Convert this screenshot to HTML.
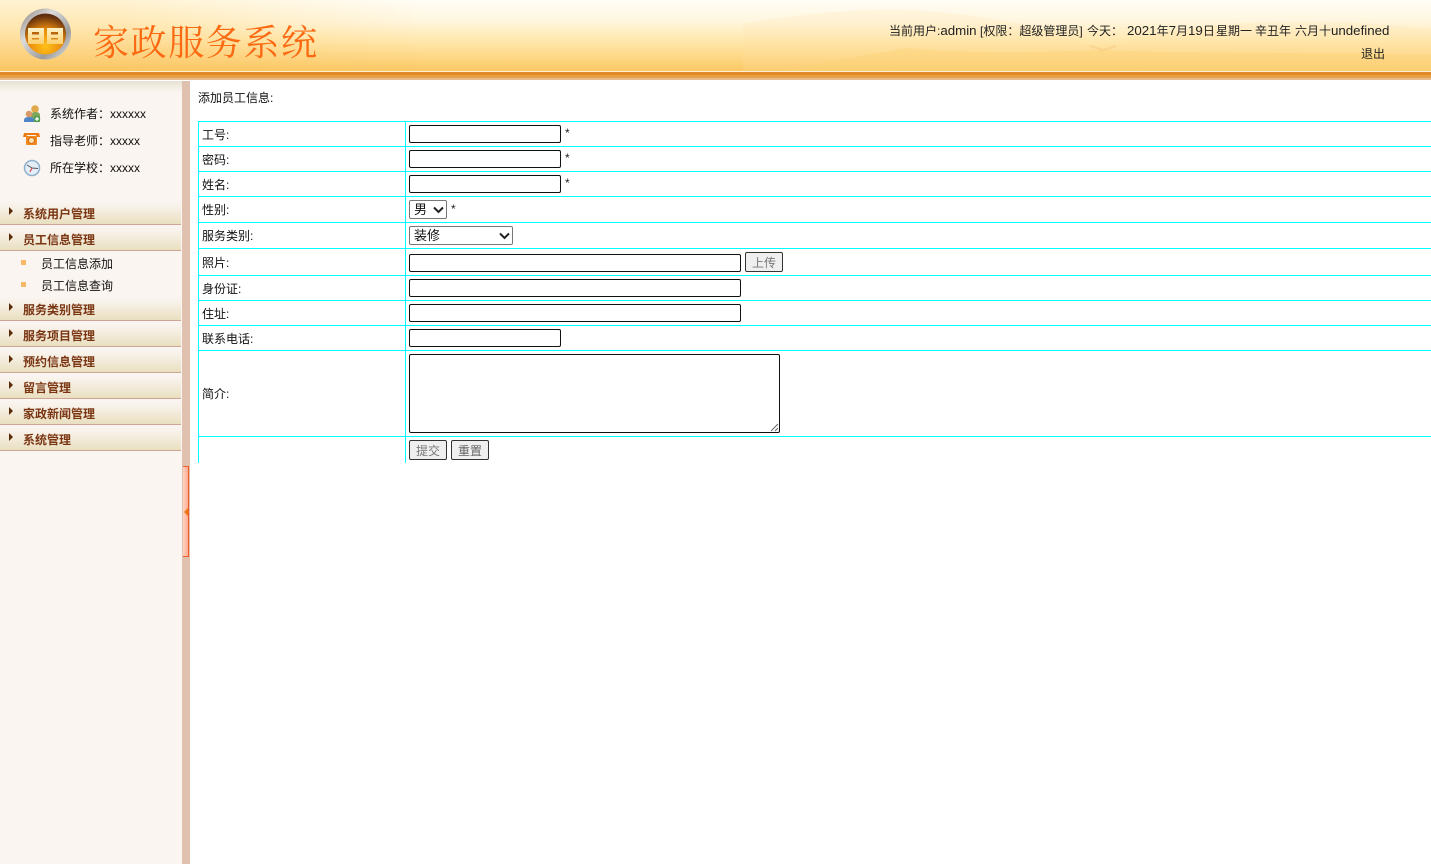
<!DOCTYPE html>
<html lang="zh"><head><meta charset="utf-8"><title>家政服务系统</title>
<style>
html,body{margin:0;padding:0;width:1431px;height:864px;overflow:hidden;background:#fff}
body{position:relative;font:12px/16px "Liberation Sans","Noto Sans CJK SC",sans-serif;color:#111}
.a{position:absolute;white-space:nowrap}
.t{position:absolute;white-space:nowrap;top:23px;color:#222}
.t u{text-decoration:none;font-size:13.300px}
.m{position:absolute;left:0;width:181px;height:22px;background:linear-gradient(#faf5f0 0,#f6efe4 30%,#e9dfc0 100%);border-bottom:1px solid #cfa595}
.m b{position:absolute;left:23px;top:4px;color:#7a3512;font-weight:bold;line-height:16px;white-space:nowrap}
.m i{position:absolute;left:9px;top:5px;width:0;height:0;border-left:4px solid #5a2a08;border-top:4px solid transparent;border-bottom:4px solid transparent}
.h{position:absolute;left:198px;width:1233px;height:1px;background:#0ff}
.l{position:absolute;left:202px;line-height:16px;white-space:nowrap}
.in{position:absolute;box-sizing:border-box;background:#fff;border:1px solid #111;border-radius:2px;left:409px;height:18px}
.sel{position:absolute;box-sizing:border-box;background:#fff;border:1px solid #777;border-radius:2px;left:409px;height:19px;line-height:17px;padding-left:4px;font-size:13px}
.btn{position:absolute;box-sizing:border-box;background:#efefef;border:1px solid #333;border-radius:2px;height:20px;width:38px;text-align:center;line-height:20px;color:#777}
.star{position:absolute;line-height:14px;color:#222}
.bl{position:absolute;left:21px;width:5px;height:5px;background:#f8b868;border:0}
</style></head><body>

<svg class="a" style="left:0;top:0" width="1431" height="81">
<defs>
<linearGradient id="g" x1="0" y1="0" x2="0" y2="1"><stop offset="0" stop-color="#fffdf6"/><stop offset=".3" stop-color="#fff6de"/><stop offset=".6" stop-color="#ffe6a8"/><stop offset="1" stop-color="#fcc964"/></linearGradient>
<linearGradient id="gl" x1="0" y1="0" x2="0" y2="1"><stop offset="0" stop-color="#fff3d4"/><stop offset=".4" stop-color="#ffe6ae"/><stop offset="1" stop-color="#fbc662"/></linearGradient>
<linearGradient id="fade" x1="0" x2="1" y1="0" y2="0"><stop offset="0" stop-color="#fff"/><stop offset=".3" stop-color="#fff"/><stop offset="1" stop-color="#000"/></linearGradient>
<mask id="mk"><rect width="420" height="71" fill="url(#fade)"/></mask>
<radialGradient id="ball" cx=".5" cy=".8" r=".75"><stop offset="0" stop-color="#ffc21a"/><stop offset=".55" stop-color="#e98a0c"/><stop offset="1" stop-color="#5f2e10"/></radialGradient>
<linearGradient id="ring" x1="0" y1="0" x2="1" y2="1"><stop offset="0" stop-color="#8a8078"/><stop offset=".35" stop-color="#dcdcdc"/><stop offset=".7" stop-color="#9c9c9c"/><stop offset="1" stop-color="#e8e8e8"/></linearGradient>
<linearGradient id="glyph" x1="0" y1="0" x2="0" y2="1"><stop offset="0" stop-color="#fff2c8"/><stop offset="1" stop-color="#fcd070"/></linearGradient>
</defs>
<rect width="1431" height="71" fill="url(#g)"/>
<rect width="420" height="71" fill="url(#gl)" mask="url(#mk)"/>
<path d="M743 71V24C800 14 860 8 910 10C980 14 1040 25 1103 48C1170 24 1300 12 1431 30V71Z" fill="#fde0a8" opacity=".2"/>
<path d="M780 71C830 62 870 55 905 48C970 54 1040 52 1103 50C1190 54 1320 52 1431 55V71Z" fill="#fdd378" opacity=".45"/>
<path d="M1090 46L1103 50L1116 46" fill="none" stroke="#f2bd76" stroke-width="2" opacity=".4"/>
<rect y="71" width="1431" height="1" fill="#fff0d0"/>
<rect y="72" width="1431" height="3" fill="#de8a2a"/>
<rect y="75" width="1431" height="2" fill="#ee9f3a"/>
<rect y="77" width="1431" height="1" fill="#d9a05c"/>
<rect y="78" width="1431" height="2" fill="#eab98c"/>
<circle cx="45.500" cy="34" r="25.500" fill="url(#ring)"/>
<circle cx="45.500" cy="34" r="20.500" fill="url(#ball)"/>
<path d="M28 28h16v16h-16zM47 28h16v16h-16z" fill="url(#glyph)"/>
<path d="M32 32h7v2.500h-7zM51 32h7v2.500h-7z" fill="#b8660c"/>
<path d="M32 38h7v1.500h-7zM51 38h7v1.500h-7z" fill="#d8861a"/>
</svg>

<div class="a" style="left:93px;top:17px;font:36px/52px 'Liberation Serif','Noto Serif CJK SC',serif;letter-spacing:1.600px;color:#fb6a12">家政服务系统</div>

<div class="t" style="left:889px">当前用户:<u>admin</u></div>
<div class="t" style="left:980px">[权限：超级管理员]</div>
<div class="t" style="left:1087px">今天：</div>
<div class="t" style="left:1127px"><u>2021</u>年<u>7</u>月<u>19</u>日</div>
<div class="t" style="left:1216px">星期一</div>
<div class="t" style="left:1255px">辛丑年</div>
<div class="t" style="left:1295px">六月十</div>
<div class="t" style="left:1331px"><u>undefined</u></div>
<div class="a" style="left:1361px;top:46px;color:#222">退出</div>

<!-- sidebar -->
<div class="a" style="left:0;top:81px;width:182px;height:783px;background:#faf5f0"></div>
<div class="a" style="left:0;top:81px;width:182px;height:11px;background:linear-gradient(#e8e2d4,#faf5f0)"></div>
<div class="a" style="left:182px;top:81px;width:8px;height:783px;background:#e0c0ae"></div>
<div class="a" style="left:183px;top:466px;width:5px;height:89px;background:linear-gradient(90deg,#ffd2c0,#ffae96);border:1px solid #ee5a28;border-left:0"></div>
<div class="a" style="left:184px;top:508px;width:0;height:0;border-right:4px solid #ea7a10;border-top:4px solid transparent;border-bottom:4px solid transparent"></div>

<svg class="a" style="left:22px;top:103px" width="22" height="76">
<circle cx="13" cy="6" r="3.800" fill="#e0a94c"/><path d="M9 19v-7q0-3 4.500-3t4.500 3v7z" fill="#7fa65a"/>
<circle cx="7" cy="11" r="3.300" fill="#d99a68"/><path d="M2 19v-2q0-3 5-3t5 3v2z" fill="#4f86c6"/>
<circle cx="15" cy="16" r="3.200" fill="#4d9a4d"/><path d="M13 15.400h4v1.200h-4zM14.400 14h1.200v4h-1.200z" fill="#fff"/>
<path d="M2 30h15l1 4h-3l-1-2h-9l-1 2h-3z" fill="#ec7a10"/><rect x="4" y="33" width="11" height="9" rx="1" fill="#f08a1c"/><circle cx="9.500" cy="37.500" r="3" fill="#fce0b0" stroke="#d96a10"/>
<circle cx="10" cy="65" r="7.500" fill="#e4eef6" stroke="#8fb0cc" stroke-width="1.500"/><path d="M10 65L5 62M10 65L16 65.500" stroke="#555" fill="none"/><path d="M10 65L8 69" stroke="#d33" fill="none"/>
</svg>
<div class="a" style="left:50px;top:106px">系统作者：xxxxxx</div>
<div class="a" style="left:50px;top:133px">指导老师：xxxxx</div>
<div class="a" style="left:50px;top:160px">所在学校：xxxxx</div>

<div class="m" style="top:202px"><i></i><b>系统用户管理</b></div>
<div class="m" style="top:228px"><i></i><b>员工信息管理</b></div>
<div class="bl" style="top:260px"></div><div class="a" style="left:41px;top:256px">员工信息添加</div>
<div class="bl" style="top:282px"></div><div class="a" style="left:41px;top:278px">员工信息查询</div>
<div class="m" style="top:298px"><i></i><b>服务类别管理</b></div>
<div class="m" style="top:324px"><i></i><b>服务项目管理</b></div>
<div class="m" style="top:350px"><i></i><b>预约信息管理</b></div>
<div class="m" style="top:376px"><i></i><b>留言管理</b></div>
<div class="m" style="top:402px"><i></i><b>家政新闻管理</b></div>
<div class="m" style="top:428px"><i></i><b>系统管理</b></div>

<!-- content -->
<div class="a" style="left:198px;top:90px">添加员工信息:</div>
<div class="a" style="left:198px;top:121px;width:1px;height:342px;background:#0ff"></div>
<div class="a" style="left:405px;top:121px;width:1px;height:342px;background:#0ff"></div>
<div class="h" style="top:121px"></div><div class="h" style="top:146px"></div><div class="h" style="top:171px"></div><div class="h" style="top:196px"></div><div class="h" style="top:222px"></div><div class="h" style="top:248px"></div><div class="h" style="top:275px"></div><div class="h" style="top:300px"></div><div class="h" style="top:325px"></div><div class="h" style="top:350px"></div><div class="h" style="top:436px"></div>

<div class="l" style="top:127px">工号:</div>
<div class="l" style="top:152px">密码:</div>
<div class="l" style="top:177px">姓名:</div>
<div class="l" style="top:202px">性别:</div>
<div class="l" style="top:228px">服务类别:</div>
<div class="l" style="top:255px">照片:</div>
<div class="l" style="top:281px">身份证:</div>
<div class="l" style="top:306px">住址:</div>
<div class="l" style="top:331px">联系电话:</div>
<div class="l" style="top:386px">简介:</div>

<div class="in" style="top:125px;width:152px"></div><div class="star" style="left:565px;top:126px">*</div>
<div class="in" style="top:150px;width:152px"></div><div class="star" style="left:565px;top:151px">*</div>
<div class="in" style="top:175px;width:152px"></div><div class="star" style="left:565px;top:176px">*</div>
<div class="sel" style="top:200px;width:38px">男<svg class="a" style="left:23px;top:5px" width="11" height="8"><path d="M1 1.500L5.500 6L10 1.500" fill="none" stroke="#222" stroke-width="2"/></svg></div>
<div class="star" style="left:451px;top:202px">*</div>
<div class="sel" style="top:226px;width:104px">装修<svg class="a" style="left:89px;top:5px" width="11" height="8"><path d="M1 1.500L5.500 6L10 1.500" fill="none" stroke="#222" stroke-width="2"/></svg></div>
<div class="in" style="top:254px;width:332px"></div>
<div class="btn" style="left:745px;top:252px">上传</div>
<div class="in" style="top:279px;width:332px"></div>
<div class="in" style="top:304px;width:332px"></div>
<div class="in" style="top:329px;width:152px"></div>
<div class="in" style="top:354px;width:371px;height:79px"><svg class="a" style="right:0;bottom:0" width="10" height="10"><path d="M2 9L9 2M6 9L9 6" stroke="#666" fill="none"/></svg></div>
<div class="btn" style="left:409px;top:440px">提交</div>
<div class="btn" style="left:451px;top:440px;color:#666">重置</div>
</body></html>
